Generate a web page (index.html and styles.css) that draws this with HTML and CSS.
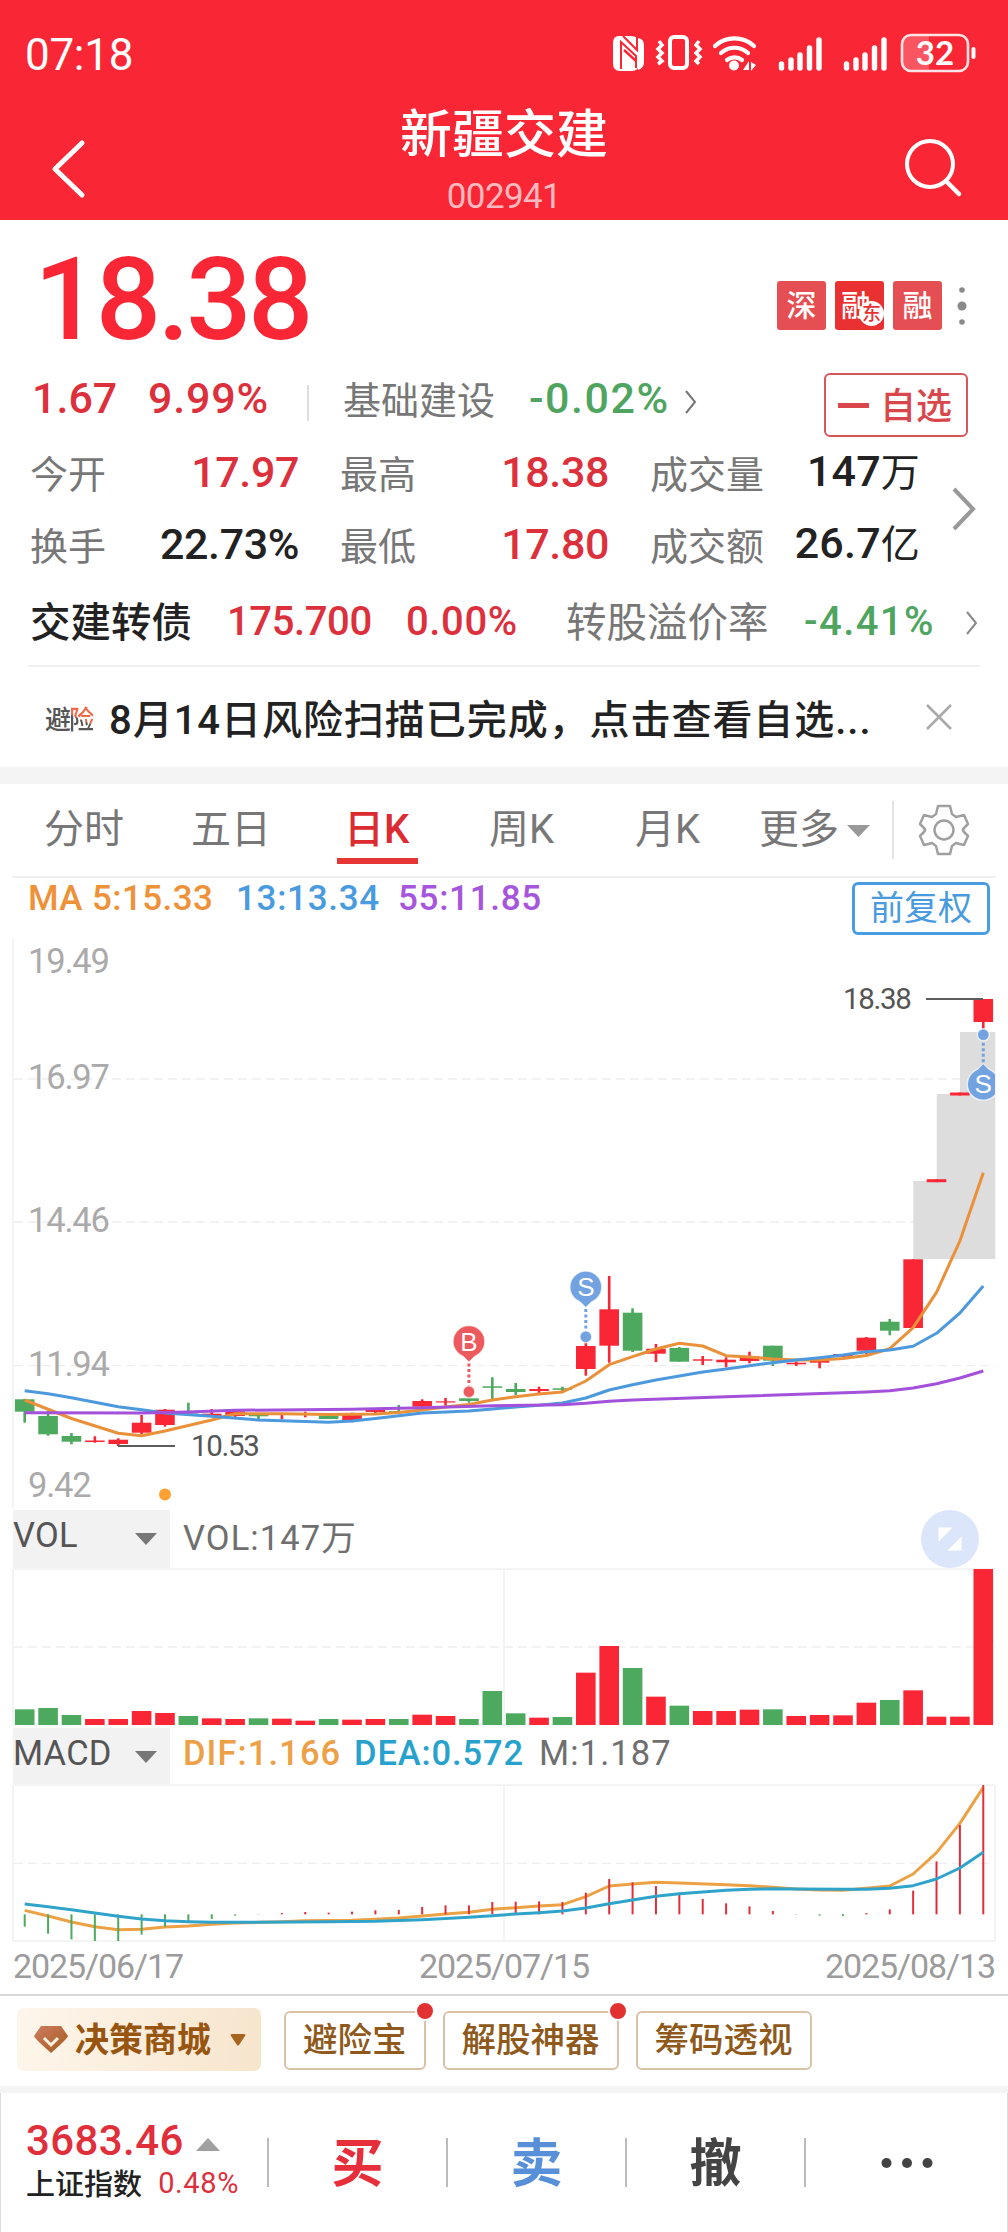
FILE: index.html
```html
<!DOCTYPE html>
<html lang="zh-CN">
<head>
<meta charset="utf-8">
<title>新疆交建 002941</title>
<link rel="stylesheet" href="styles.css">
</head>
<body>
<header class="top">
  <div class="status">
    <span class="clock">07:18</span>
    <svg class="status-icons" width="400" height="50" viewBox="0 0 400 50">
      <path d="M10 7h12q8 0 8 8v19q0 8-7 8H11q-7 0-7-8V14q0-7 6-7z" fill="#fff"/>
      <path d="M12 40V13l15 14v12" fill="none" stroke="#f92735" stroke-width="2"/>
      <path d="M14 7l14 14V8" fill="none" stroke="#f92735" stroke-width="2"/>
      <path d="M15 21l12 11" stroke="#f92735" stroke-width="2.400"/>
      <path d="M29 9q6 1 6 7v17q0 6-6 8z" fill="#fff"/>
      <g fill="none" stroke="#fff" stroke-width="4">
        <rect x="61" y="8" width="17" height="31" rx="4"/>
        <path d="M50 12l3 4-4 4 4 4-4 4 4 4-4 3M90 12l-3 4 4 4-4 4 4 4-4 4 3 3" stroke-width="3.500"/>
        <path d="M106 17a29 29 0 0 1 39 0M112 24a20 20 0 0 1 27 0M118 31a12 12 0 0 1 15 0" stroke-width="4.200" stroke-linecap="round"/>
      </g>
      <circle cx="125" cy="36.500" r="5" fill="#fff"/>
      <path d="M140 32v9h-6zM142 33v9l5-6z" fill="#fff"/>
      <path d="M172.500 35v4M182 31v8M191 26v13M200.500 19v20M210 11v28M237.500 35v4M247 31v8M256 26v13M265.500 19v20M275 11v28" stroke="#fff" stroke-width="5.400" stroke-linecap="round"/>
      <path d="M302 7h18v35h-18q-8 0-8-8V15q0-8 8-8z" fill="#fff" opacity=".22"/>
      <rect x="293" y="6" width="66" height="36" rx="9" fill="none" stroke="#ffe4e6" stroke-width="2.600"/>
      <path d="M364.500 20v8" stroke="#fff" stroke-width="4" stroke-linecap="round"/>
      <text x="326" y="36" text-anchor="middle" class="battery">32</text>
    </svg>
  </div>
  <div class="nav">
    <svg width="64" height="70" viewBox="0 0 64 70"><path d="M50 9L23 35l27 26" fill="none" stroke="#fff" stroke-width="5" stroke-linecap="round" stroke-linejoin="round"/></svg>
    <div class="nav-title"><h1>新疆交建</h1><p>002941</p></div>
    <svg width="64" height="70" viewBox="0 0 64 70"><circle cx="31" cy="30" r="23" fill="none" stroke="#fff" stroke-width="4"/><path d="M47 47l13 13" stroke="#fff" stroke-width="4.500" stroke-linecap="round"/></svg>
  </div>
</header>

<section class="quote">
  <div class="price-row">
    <span class="price">18.38</span>
    <div class="badges">
      <b>深</b><b class="strong">融<i>东</i></b><b>融</b>
      <svg width="12" height="40" viewBox="0 0 12 40" fill="#8a8a8a"><circle cx="6" cy="4" r="2.800"/><circle cx="6" cy="20" r="4.500"/><circle cx="6" cy="36" r="2.800"/></svg>
    </div>
  </div>
  <div class="change-row">
    <span class="num up">1.67</span><span class="num up wide">9.99%</span><i class="bar"></i>
    <span class="label">基础建设</span><span class="num down wide2">-0.02%</span>
    <svg width="16" height="28" viewBox="0 0 16 28"><path d="M3 3l9 11-9 11" fill="none" stroke="#777" stroke-width="2"/></svg>
    <button class="fav"><i></i><span>自选</span></button>
  </div>
  <div class="stats">
    <div class="stat-grid">
      <span class="label">今开</span><span class="num up">17.97</span><span class="label">最高</span><span class="num up">18.38</span><span class="label">成交量</span><span class="num">147<em>万</em></span>
      <span class="label">换手</span><span class="num">22.73%</span><span class="label">最低</span><span class="num up">17.80</span><span class="label">成交额</span><span class="num">26.7<em>亿</em></span>
    </div>
    <svg width="30" height="48" viewBox="0 0 30 48"><path d="M5 4l19 20L5 44" fill="none" stroke="#999" stroke-width="4"/></svg>
  </div>
  <div class="bond">
    <span class="name">交建转债</span><span class="num up">175.700</span><span class="num up b2">0.00%</span>
    <span class="name gray">转股溢价率</span><span class="num down b3">-4.41%</span>
    <svg width="16" height="28" viewBox="0 0 16 28"><path d="M3 3l9 11-9 11" fill="none" stroke="#888" stroke-width="2"/></svg>
  </div>
  <div class="notice">
    <span class="tag">避<i>险</i></span>
    <span class="msg">8月14日风险扫描已完成，点击查看自选...</span>
    <svg width="28" height="28" viewBox="0 0 28 28"><path d="M2 2l24 24M26 2L2 26" stroke="#aaa" stroke-width="2.600"/></svg>
  </div>
</section>

<nav class="tabs">
  <span>分时</span><span>五日</span><span class="on">日K</span><span>周K</span><span>月K</span><span>更多</span>
  <svg class="tri" width="24" height="14" viewBox="0 0 24 14"><path d="M0 1h23L11.500 13z" fill="#999"/></svg>
  <i></i>
  <svg class="gear" width="52" height="52" viewBox="0 0 52 52" fill="none" stroke="#a0a0a0" stroke-width="2.500" stroke-linejoin="round">
    <path d="M20 2h12l2 8 4 3 8-2 4 9-4 4q-2 2 0 4l4 4-4 9-8-2-4 3-2 8H20l-2-8-4-3-8 2-4-9 4-4q2-2 0-4l-4-4 4-9 8 2 4-3z"/><circle cx="26" cy="26" r="9.500"/></svg>
</nav>

<section class="chart">
  <div class="ma">
    <span class="c-ma5">MA 5:15.33</span><span class="c-ma13">13:13.34</span><span class="c-ma55">55:11.85</span>
    <button>前复权</button>
  </div>
  <svg id="kline" class="pane" width="1008" height="570" viewBox="0 938 1008 570"></svg>
  <div class="ind">
    <div class="sel">VOL<svg width="24" height="14" viewBox="0 0 24 14"><path d="M1 1h22L12 13z" fill="#777"/></svg></div>
    <span class="vol">VOL:147<em>万</em></span>
    <svg class="expand" width="58" height="58" viewBox="0 0 58 58"><circle cx="29" cy="29" r="29" fill="#dce6fb"/><path d="M17.500 17.500h14l-14 14zM40.500 40.500h-14l14-14z" fill="#fff"/></svg>
  </div>
  <svg id="vol" class="pane" width="1008" height="158" viewBox="0 1568 1008 158"></svg>
  <div class="ind macd-head">
    <div class="sel">MACD<svg width="24" height="14" viewBox="0 0 24 14"><path d="M1 1h22L12 13z" fill="#777"/></svg></div>
    <span class="c-dif">DIF:1.166</span><span class="c-dea">DEA:0.572</span><span class="c-m">M:1.187</span>
  </div>
  <svg id="macd" class="pane" width="1008" height="160" viewBox="0 1784 1008 160"></svg>
  <div class="dates"><span>2025/06/17</span><span>2025/07/15</span><span>2025/08/13</span></div>
</section>

<section class="tools">
  <div class="mall">
    <svg width="36" height="30" viewBox="0 0 36 30"><defs><linearGradient id="gem" x2="1" y2="1"><stop stop-color="#cf7c61"/><stop offset="1" stop-color="#a45c1c"/></linearGradient></defs><path d="M8 1h20l7 10q0 2-17 17Q1 13 1 11z" fill="url(#gem)"/><path d="M11 13l7 7 7-7" fill="none" stroke="#fff3e4" stroke-width="3"/></svg>
    <b>决策商城</b>
    <svg width="16" height="12" viewBox="0 0 16 12"><path d="M2 0h12q2 0 1 2L9 11q-1 1-2 0L1 2Q0 0 2 0z" fill="#a8651f"/></svg>
  </div>
  <div class="tool dot">避险宝</div><div class="tool dot">解股神器</div><div class="tool">筹码透视</div>
</section>

<footer class="trade">
  <div class="index">
    <div class="idx-top"><span>3683.46</span><svg width="24" height="13" viewBox="0 0 24 13"><path d="M0 13h24L12 0z" fill="#a0a0a0"/></svg></div>
    <div class="idx-bot"><span>上证指数</span><b>0.48%</b></div>
  </div>
  <div class="act buy"><span>买</span></div><div class="act sell"><span>卖</span></div><div class="act"><span>撤</span></div>
  <div class="act more"><svg width="54" height="12" viewBox="0 0 54 12" fill="#444"><circle cx="6.500" cy="6" r="5"/><circle cx="27" cy="6" r="5"/><circle cx="47.500" cy="6" r="5"/></svg></div>
</footer>
<script>
(function () {
const RED = '#f92735', GREEN = '#4da95d', GRID = '#f0f0f0';
const X0 = 24.7, STEP = 23.38, x = i => X0 + i * STEP;

// colour, body top, body bottom, high, low
const candles = [
  ['g',1399.3,1411.7,1399,1422.7],['g',1416,1434.3,1410.7,1435.7],['g',1436,1441.7,1433,1444.3],['r',1440.5,1442,1436.3,1442.7],
  ['r',1439.7,1444,1438.3,1446],['r',1422.7,1432.7,1415,1434],['r',1409.7,1425,1409,1426.7],['g',1412,1413.5,1402.7,1413.5],
  ['r',1413.7,1416,1409,1416.7],['r',1411.3,1416,1411,1417.3],['g',1413.3,1416.3,1413,1419.3],['r',1413.8,1415,1413,1419.3],
  ['r',1413.3,1414.5,1411.7,1417.3],['g',1415.7,1419,1413.7,1419],['r',1413.3,1420,1412.7,1422.3],['r',1409.7,1412,1409,1413],
  ['g',1411,1412.2,1405,1412.4],['r',1401,1406.7,1399.3,1409.3],['r',1401.3,1402.5,1398,1405.7],['g',1398.3,1401,1395,1402.7],
  ['g',1386.3,1387.8,1377.3,1400],['g',1389,1392,1383,1395],['r',1389,1391,1386.7,1393],['g',1388.3,1389.8,1386.7,1391.7],
  ['r',1346,1369,1340,1375.7],['r',1309.3,1345.7,1276,1362.7],['g',1312.7,1350.7,1308.3,1352],['r',1348.7,1353.7,1344,1362],
  ['g',1348,1361.7,1347,1361.7],['r',1359.3,1360.7,1356,1365],['r',1359.7,1362.3,1357.3,1367.3],['r',1356.3,1361,1351.7,1363.3],
  ['g',1345.7,1360.7,1345.7,1366],['r',1362.7,1364.3,1361.7,1366],['r',1361,1362.7,1361,1368.3],['r',1354,1356.7,1354,1356.7],
  ['r',1337.7,1350.7,1337,1354],['g',1321.7,1330.7,1319,1335.3],['r',1259.3,1328,1259.3,1328],['r',1179.2,1182.2,1179.2,1182.2],
  ['r',1092.5,1095.5,1092.5,1095.5],['r',999,1022,999,1032]
];
const ma5 = [[0,1400],[2,1418.5],[4,1433.3],[5,1435.7],[6,1431],[8,1420],[9,1413.7],[11,1413.7],[13,1414.5],[15,1414],[16,1412.5],[17,1410],[18,1407],[19,1404.5],[20,1400],[21,1396.7],[22,1394],[23,1392],[24,1381],[25,1364.7],[26,1356.7],[27,1349],[28,1343.3],[29,1346],[30,1355.7],[31,1357],[32,1359],[33,1360],[34,1360],[35,1358.5],[36,1355.5],[37,1348.7],[38,1327.7],[39,1292.3],[40,1241],[41,1172.7]];
const ma13 = [[0,1390.7],[1,1393.7],[2,1397.7],[4,1406.7],[5,1409.7],[6,1413],[8,1416.3],[10,1420],[13,1422.3],[14,1421],[15,1418.5],[17,1413],[19,1411],[20,1409],[21,1407],[22,1405.3],[23,1403],[24,1398],[25,1390],[26,1384.7],[27,1380],[28,1376],[29,1372],[30,1369],[31,1365.7],[32,1362.7],[33,1360],[34,1357.7],[35,1355],[36,1351.7],[37,1350],[38,1346.3],[39,1333.3],[40,1313],[41,1286]];
const ma55 = [[0,1412.7],[5,1413],[7,1412],[9,1410.3],[14,1409.3],[17,1407.7],[20,1405.7],[23,1404.7],[24,1403.3],[25,1401.3],[26,1400],[30,1396.7],[36,1392],[37,1390.7],[38,1388],[39,1383.7],[40,1378],[41,1371]];

// volume bar heights, in thirds of a pixel
const volume = [47,51,30,18,18,42,36,27,20,18,20,19,13,18,16,18,18,31,27,18,102,35,22,24,157,237,171,85,58,42,42,46,47,27,30,29,67,75,104,25,25,468];
const volGreen = new Set([0,1,2,7,10,13,16,19,20,21,23,26,28,32,37]);

// histogram, DIF and DEA levels, in thirds of a pixel below the pane origin
const hist = [590,611,628,633,633,614,590,577,567,557,554,549,546,548,545,541,540,531,526,526,516,515,514,516,488,447,457,468,490,507,520,529,543,554,557,558,549,538,482,394,285,165];
const dif = [[0,541],[1,558],[2,576],[3,590],[4,599],[5,598],[6,591],[7,588],[8,583],[9,579],[10,577],[11,575],[12,572],[14,571],[15,568],[16,564],[17,558],[18,552],[19,547],[20,538],[21,533],[22,528],[23,524],[24,500],[25,468],[26,462],[27,457],[28,459],[30,464],[31,467],[32,472],[33,477],[34,480],[35,481],[36,475],[37,468],[38,432],[39,368],[40,280],[41,172]];
const dea = [[0,522],[1,530],[2,539],[3,549],[4,559],[5,567],[6,572],[7,575],[8,577],[10,577],[13,575],[15,574],[17,569],[19,562],[20,557],[21,552],[22,548],[23,543],[24,534],[25,521],[26,510],[27,499],[28,491],[29,486],[30,481],[31,478],[32,476],[33,477],[35,478],[36,478],[37,475],[38,467],[39,447],[40,414],[41,367]];

const rect = (l, t, w, h, f) => `<rect x="${l}" y="${t}" width="${w}" height="${h}" fill="${f}"/>`;
const line = (x1, y1, x2, y2, c, w, extra = '') => `<line x1="${x1}" y1="${y1}" x2="${x2}" y2="${y2}" stroke="${c}" stroke-width="${w}" ${extra}/>`;
const curve = (pts, c, w) => `<polyline points="${pts.map(([i, y]) => x(i) + ',' + y).join(' ')}" fill="none" stroke="${c}" stroke-width="${w}" stroke-linejoin="round"/>`;
const text = (l, y, s, cls) => `<text x="${l}" y="${y}" class="${cls}">${s}</text>`;
const dashed = y => line(14, y, 995, y, '#eee', 1.3, 'stroke-dasharray="9 5"');

function pin(i, cy, dotY, letter, c) {
  const d = Math.sign(dotY - cy), px = x(i);
  const tail = `M${px - 8} ${cy + d * 12}L${px} ${cy + d * 20}L${px + 8} ${cy + d * 12}z`;
  return `<g stroke="#fff" stroke-opacity=".7" stroke-width="1.5" fill="${c}" clip-path="url(#plot)">
    <path d="${tail}"/><circle cx="${px}" cy="${cy}" r="16"/><circle cx="${px}" cy="${dotY}" r="6"/></g>`
    + `<path d="${tail}" fill="${c}"/>`
    + line(px, cy + d * 22, px, dotY - d * 6, c, 3, 'stroke-dasharray="3 2.5"')
    + `<text x="${px}" y="${cy + 9}" text-anchor="middle" class="pin">${letter}</text>`;
}

let k = '<clipPath id="plot"><rect x="13" y="938" width="982" height="570"/></clipPath>';
k += line(13, 938, 13, 1508, GRID, 1.5) + [1079, 1222, 1365.7].map(dashed).join('');
k += [[973,'19.49'],[1089,'16.97'],[1232,'14.46'],[1376,'11.94'],[1497,'9.42']].map(([y, s]) => text(28, y, s, 'axis')).join('');
k += rect(913.3, 1181, 82, 78, '#ddd') + rect(936.7, 1094, 58.6, 87, '#ddd') + rect(960, 1032, 35.3, 62, '#ddd');
candles.forEach(([c, t, b, hi, lo], i) => {
  const f = c === 'r' ? RED : GREEN;
  k += rect(x(i) - 9.8, t, 19.6, b - t, f) + rect(x(i) - 1.3, hi, 2.6, lo - hi, f);
});
k += curve(ma5, '#ea9038', 3) + curve(ma13, '#4c99dd', 3) + curve(ma55, '#a351da', 3);
k += line(118, 1446, 175, 1446, '#5c5c5c', 2) + text(191, 1456.3, '10.53', 'mark');
k += line(926, 999, 983, 999, '#5c5c5c', 2) + text(843, 1009.3, '18.38', 'mark');
k += '<circle cx="165" cy="1494.5" r="6" fill="#ffa033"/>';
k += pin(19, 1341.5, 1391.7, 'B', '#ed5a5e') + pin(24, 1287, 1336.7, 'S', '#72a2e0') + pin(41, 1084.3, 1034.7, 'S', '#72a2e0');
document.getElementById('kline').innerHTML = k;

let v = line(13, 1569, 995, 1569, GRID, 1.5) + line(13, 1569, 13, 1725, GRID, 1.5) + line(504, 1569, 504, 1725, GRID, 1.5) + dashed(1647);
volume.forEach((h, i) => { v += rect(x(i) - 9.8, 1725 - h / 3, 19.6, h / 3, volGreen.has(i) ? GREEN : RED); });
document.getElementById('vol').innerHTML = v;

const level = n => 1730 + n / 3;
let m = line(13, 1785, 995, 1785, GRID, 1.5) + line(13, 1941, 995, 1941, GRID, 1.5)
  + line(13, 1785, 13, 1941, GRID, 1.5) + line(504, 1785, 504, 1941, GRID, 1.5) + line(995, 1785, 995, 1941, GRID, 1.5) + dashed(1863.3);
m += curve(dif.map(([i, n]) => [i, level(n)]), '#eca145', 3);
hist.forEach((n, i) => { m += line(x(i), level(553), x(i), level(n), n > 553 ? GREEN : '#e02f3b', 2); });
m += curve(dea.map(([i, n]) => [i, level(n)]), '#30a3ca', 3);
document.getElementById('macd').innerHTML = m;
})();
</script>
</body>
</html>
```
FILE: styles.css
```css
* { box-sizing: border-box; }
body { margin: 0; width: 1008px; height: 2232px; overflow: hidden; background: #fff; color: #222; font-family: Roboto, "Noto Sans CJK SC", sans-serif; }
h1, p { margin: 0; }
i, em { font-style: normal; }
svg { display: block; flex: none; }
button { padding: 0; background: none; font-family: inherit; }

.top { height: 220px; background: #f92735; color: #fff; }
.status { display: flex; justify-content: space-between; height: 108px; padding: 30px 0 0 25px; }
.clock { font-size: 44px; line-height: 50px; font-weight: 400; letter-spacing: -.3px; }
.battery { font: 700 33px Lato, sans-serif; fill: #fff; }
.status-icons { margin: -1px -1px 0 auto; }
.nav { display: flex; align-items: center; justify-content: space-between; height: 112px; padding: 0 45px 0 32px; }
.nav > svg { margin-top: 9px; }
.nav-title { height: 112px; padding: 2px 0 0 13px; text-align: center; }
.nav-title h1 { font-size: 52px; line-height: 52px; font-weight: 500; }
.nav-title p { margin-top: 17px; font-size: 35px; line-height: 36px; letter-spacing: -.6px; color: #ffb9be; }

.quote { height: 547px; }
.price-row { display: flex; justify-content: space-between; height: 142px; padding: 18px 40px 0 34px; }
.price { font-size: 115px; line-height: 124px; font-weight: 500; letter-spacing: -3.500px; color: #f92735; }
.badges { display: flex; gap: 9px; padding-top: 43px; }
.badges b { position: relative; width: 49px; height: 49px; border-radius: 3px; background: #e54f53; color: #fff; font-size: 30px; line-height: 50px; font-weight: 500; text-align: center; }
.badges .strong { background: #e93131; }
.badges .strong { padding-right: 7px; }
.badges .strong i { position: absolute; left: 24px; top: 20px; width: 25px; height: 25px; border-radius: 50%; background: #fff; color: #e93131; font-size: 19px; line-height: 26px; }
.badges svg { margin: 5px 0 0 5px; }

.num { font-size: 43px; line-height: 50px; font-weight: 500; white-space: nowrap; }
.num em { font-size: 39px; font-weight: 400; }
.up { color: #dc303c; }
.down { color: #4fa55f; }
.label { padding-top: 5px; font-size: 38px; line-height: 50px; color: #777; white-space: nowrap; }
.change-row { display: grid; grid-template-columns: 116px 159px 36px 186px 154px 141px 144px; height: 73px; padding: 12px 0 0 32px; align-items: center; }
.change-row .num { margin-top: -16px; }
.change-row .label { margin-top: -15px; }
.change-row svg { margin-top: -8px; }
.wide { letter-spacing: .8px; }
.wide2 { letter-spacing: 1.500px; }
.bar { width: 2px; height: 36px; margin-top: -5px; background: #ddd; }
.fav { display: flex; align-items: center; gap: 11px; height: 64px; margin-top: -1px; padding-left: 12px; border: 2px solid #d5575b; border-radius: 6px; color: #d9474c; font-size: 36px; line-height: 56px; font-weight: 500; }
.fav i { width: 31px; height: 5px; background: #d9474c; }
.fav span { padding-top: 4px; }
.stats { display: flex; height: 150px; padding-left: 30px; }
.stat-grid { display: grid; grid-template-columns: 104px 206px 104px 206px 115px 155px; grid-template-rows: 72px 72px; width: 890px; padding-top: 1px; align-items: center; }
.stat-grid .num { padding-right: 41px; text-align: right; letter-spacing: -.4px; }
.stat-grid .num:nth-child(6n) { padding-right: 0; letter-spacing: .2px; }
.stats svg { margin: 50px 0 0 29px; }
.bond { display: grid; grid-template-columns: 197px 179px 160px 238px 160px 16px; height: 80px; padding: 13px 0 0 30px; }
.bond .num { font-size: 40px; line-height: 47px; letter-spacing: -.4px; }
.name { padding-top: 2px; font-size: 40.500px; line-height: 47px; white-space: nowrap; }
.name:first-child { font-weight: 500; }
.gray { color: #777; }
.bond .b2 { letter-spacing: .6px; }
.bond .b3 { letter-spacing: 1.400px; }
.bond svg { margin-top: 11px; }
.notice { display: flex; align-items: center; height: 102px; margin: 0 28px; padding-left: 17px; border-top: 2px solid #efefef; }
.tag { width: 47px; font-size: 26px; font-weight: 500; letter-spacing: -2px; color: #555; white-space: nowrap; }
.tag i { background: linear-gradient(25deg, #555 50%, #ec6a4a 52%); -webkit-background-clip: text; background-clip: text; color: transparent; }
.msg { flex: 1; padding: 0 0 1px 17px; font-size: 40px; font-weight: 500; letter-spacing: .950px; white-space: nowrap; }
.notice svg { margin-right: 27px; }

.tabs { display: grid; grid-template-columns: 147px 154px 144px 146px 124px 88px 45px 26px 54px; align-items: start; height: 109px; padding-left: 44px; border-top: 17px solid #f4f4f4; color: #777; font-size: 40px; line-height: 50px; }
.tabs > span { padding-top: 21px; height: 80px; white-space: nowrap; }
.tabs .on { margin-left: -8px; width: 81px; padding-left: 7px; border-bottom: 6px solid #e63535; color: #dc2b31; font-weight: 500; }
.tabs .tri { margin-top: 40px; }
.tabs > i { width: 2px; height: 58px; margin-top: 17px; background: #e3e3e3; }
.tabs .gear { margin-top: 20px; }

.chart { height: 1118px; }
.ma { display: flex; height: 62px; margin: 0 12px; padding: 0 6px 0 16px; border-top: 2px solid #f0f0f0; font-size: 35px; line-height: 41px; font-weight: 500; white-space: nowrap; letter-spacing: .7px; }
.ma span { width: 162px; }
.ma .c-ma5 { width: 208px; letter-spacing: .4px; color: #ee923a; }
.c-ma13 { color: #489bdf; }
.c-ma55 { color: #a556dc; }
.ma button { width: 138px; height: 53px; margin: 4px 0 0 auto; border: 3px solid #4a9de0; border-radius: 6px; color: #489bdf; font-size: 34px; line-height: 43px; letter-spacing: 0; }
.ind { display: flex; height: 60px; padding-left: 13px; font-size: 34.500px; line-height: 54px; color: #6f6f6f; white-space: nowrap; letter-spacing: 1.100px; }
.sel { display: flex; justify-content: space-between; align-items: flex-start; width: 157px; height: 58px; margin: 2px 13px 0 0; padding-right: 12px; background: #f2f2f2; color: #555; line-height: 50px; letter-spacing: .2px; }
.sel svg { margin-top: 22px; }
.vol { padding-top: 3px; }
.ind .expand { margin: 2px 29px 0 auto; }
.macd-head { height: 58px; }
.macd-head .sel { height: 56px; }
.c-dif { width: 171px; color: #eda045; font-weight: 500; }
.c-dea { width: 185px; color: #27a2cc; font-weight: 500; letter-spacing: .9px; }
.dates { display: flex; justify-content: space-between; padding: 2px 13px 0 13px; font-size: 34px; line-height: 40px; letter-spacing: -1.100px; color: #9c9c9c; }
.axis { font-size: 34.500px; letter-spacing: -1.200px; fill: #aaa; }
.mark { font-size: 29.500px; letter-spacing: -1.300px; fill: #555; }
.pin { font: 26px "Liberation Sans", sans-serif; fill: #fff; }

.tools { display: flex; height: 99px; padding-left: 17px; border-top: 2px solid #d8d8d8; border-bottom: 7px solid #f4f4f4; color: #8e591b; font-size: 34.500px; font-weight: 500; }
.mall { display: flex; align-items: center; width: 244px; height: 63px; margin: 12px 23px 0 0; padding: 0 15px 0 16px; border-radius: 7px; background: linear-gradient(100deg, #fef6ec, #f7e5cc); line-height: 60px; }
.mall b { margin: 0 auto 0 6px; font-size: 34px; font-weight: 700; color: #985510; }
.tool { position: relative; height: 59px; margin: 15px 17px 0 0; padding: 0 17px; border: 2px solid #d8c3a8; border-radius: 6px; line-height: 54px; }
.dot::after { content: ""; position: absolute; top: -12px; right: -11px; width: 16px; height: 16px; border: 2px solid #fff; border-radius: 50%; background: #e23131; }

.trade { display: flex; height: 140px; border: solid #ddd; border-width: 0 1px; }
.index { width: 266px; padding: 23px 0 0 25px; }
.idx-top { display: flex; align-items: center; gap: 12px; font-size: 42px; line-height: 50px; font-weight: 500; letter-spacing: .4px; color: #e02f3b; }
.idx-top svg { margin-top: 7px; }
.idx-bot { display: flex; justify-content: space-between; padding-right: 28px; font-size: 29px; line-height: 36px; }
.idx-bot span { padding-top: 1px; font-weight: 500; }
.idx-bot b { font-weight: 400; color: #dc303c; letter-spacing: .6px; margin-top: -1px; }
.act { display: flex; justify-content: center; align-items: center; flex: none; width: 179px; height: 49px; margin-top: 45px; border-left: 2px solid #bbb; font-size: 52px; font-weight: 700; color: #444; }
.act span { padding-bottom: 6px; }
.buy { color: #e62f3a; }
.sell { color: #5790d8; }
.more svg { margin: 0 -24px 0 0; }
```
